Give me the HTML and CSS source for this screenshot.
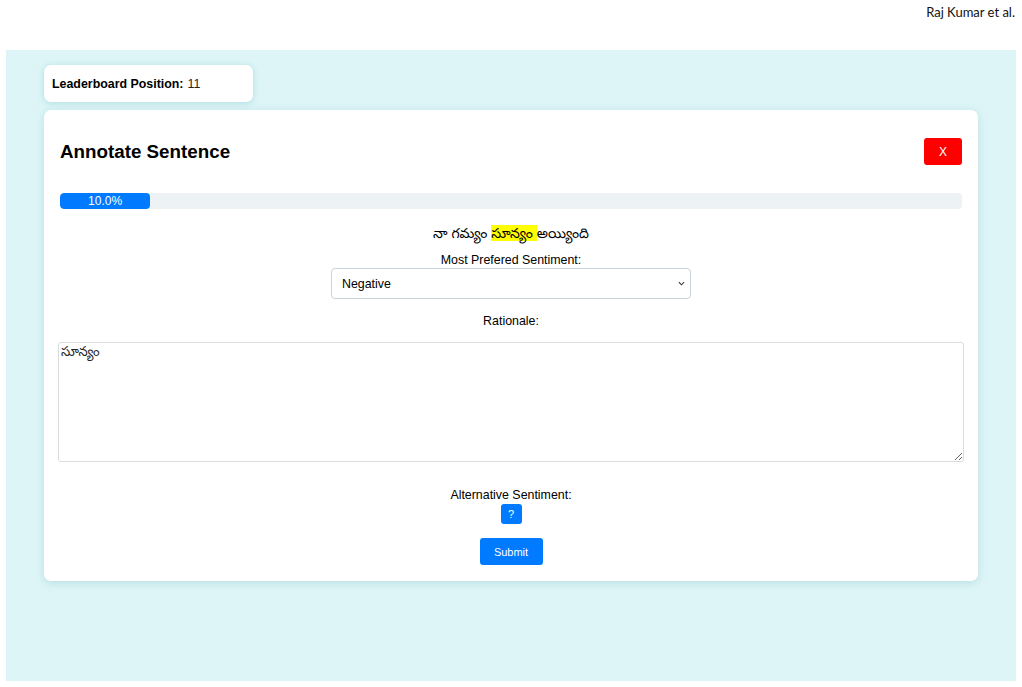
FILE: index.html
```html
<!DOCTYPE html>
<html lang="en">
<head>
  <meta charset="UTF-8" />
  <meta name="viewport" content="width=device-width, initial-scale=1.0"/>
  <title>Annotate Sentence</title>
  <link rel="stylesheet" href="styles.css">
</head>
<body>

  <div class="running-head">Raj Kumar et al.</div>

  <div class="screen">
    <div class="leaderboard">
      <strong>Leaderboard Position:</strong> <span class="rank">11</span>
    </div>

    <div class="annotate-card">
      <div class="card-head">
        <h2>Annotate Sentence</h2>
        <button class="btn-close">X</button>
      </div>

      <div class="progress">
        <div class="progress-fill" style="width: 10%;">10.0%</div>
      </div>

      <p class="sentence">నా గమ్యం <mark>సూన్యం </mark>అయ్యింది</p>

      <label class="field-label sentiment-label" for="sentiment">Most Prefered Sentiment:</label>
      <div class="select-wrap">
        <select id="sentiment" class="sentiment-select">
          <option>Negative</option>
          <option>Positive</option>
          <option>Neutral</option>
        </select>
        <svg class="select-arrow" viewBox="0 0 8 5" fill="none">
          <polyline points="1 1 4 4 7 1" />
        </svg>
      </div>

      <label class="field-label rationale-label" for="rationale">Rationale:</label>
      <textarea id="rationale" class="rationale">సూన్యం</textarea>

      <div class="field-label alt-label">Alternative Sentiment:</div>
      <button class="btn-blue btn-help">?</button>

      <button class="btn-blue btn-submit">Submit</button>
    </div>
  </div>

</body>
</html>
```

FILE: styles.css
```css
body {
  margin: 0;
  background: #fff;
  font-family: 'Liberation Sans', Arial, 'Noto Sans Telugu', 'Noto Sans', sans-serif;
  color: #000;
}

.running-head {
  height: 50px;
  padding: 4px 7px 0 0;
  box-sizing: border-box;
  text-align: right;
  font-family: 'Lato', 'DejaVu Sans', sans-serif;
  font-size: 13px;
  color: #111;
}

.screen {
  margin: 0 6px 6px;
  height: 631px;
  background: #ddf5f7;
  padding: 15px 38px 0 38px;
  box-sizing: border-box;
}

.leaderboard {
  width: 209px;
  height: 37px;
  box-sizing: border-box;
  padding: 0 8px;
  display: flex;
  align-items: center;
  gap: 4px;
  background: #fff;
  border-radius: 7px;
  box-shadow: 0 1px 6px rgba(120, 190, 200, 0.45);
  font-size: 12.4px;
}

.rank {
  color: #222;
}

.annotate-card {
  margin-top: 8px;
  background: #fff;
  border-radius: 7px;
  box-shadow: 0 2px 8px rgba(120, 180, 190, 0.35);
  padding: 28px 16px 16px;
  display: flex;
  flex-direction: column;
  align-items: center;
}

.card-head {
  align-self: stretch;
  display: flex;
  justify-content: space-between;
  align-items: center;
}

.card-head h2 {
  margin: 0;
  font-size: 18.8px;
  font-weight: bold;
}

.btn-close {
  width: 38px;
  height: 27px;
  border: none;
  border-radius: 3px;
  background: #ff0000;
  color: #fff;
  font-family: inherit;
  font-size: 12px;
}

.progress {
  align-self: stretch;
  margin-top: 28px;
  height: 16px;
  background: #edf2f5;
  border-radius: 4px;
  overflow: hidden;
}

.progress-fill {
  height: 100%;
  background: #007bff;
  border-radius: 4px;
  color: #fff;
  font-size: 12px;
  line-height: 16px;
  text-align: center;
}

.sentence {
  margin: 14px 0 0;
  font-size: 14px;
  line-height: 20px;
}

.sentence mark {
  background: #ffff00;
  color: #000;
}

.field-label {
  font-size: 12.4px;
  line-height: 15px;
}

.sentiment-label {
  margin-top: 10px;
}

.select-wrap {
  position: relative;
}

.sentiment-select {
  display: block;
  width: 360px;
  height: 31px;
  padding: 0 10px;
  border: 1px solid #c8d3da;
  border-radius: 4px;
  background: #fff;
  font-family: inherit;
  font-size: 12.4px;
  color: #000;
  appearance: none;
  -webkit-appearance: none;
}

.select-arrow {
  position: absolute;
  right: 6px;
  top: 13px;
  width: 7px;
  height: 5px;
  stroke: #333;
  stroke-width: 1.2;
  pointer-events: none;
}

.rationale-label {
  margin-top: 15px;
}

.rationale {
  align-self: stretch;
  margin: 13px -2px 0;
  height: 120px;
  box-sizing: border-box;
  padding: 2px;
  border: 1px solid #d8dde0;
  border-radius: 3px;
  font-family: 'Noto Sans Telugu', 'Noto Sans', sans-serif;
  font-size: 13px;
  color: #222;
}

.alt-label {
  margin-top: 26px;
}

.btn-blue {
  border: none;
  border-radius: 3px;
  background: #007bff;
  color: #fff;
  font-family: inherit;
  font-size: 11px;
}

.btn-help {
  margin-top: 1px;
  width: 21px;
  height: 20px;
  padding: 0;
}

.btn-submit {
  margin-top: 14px;
  width: 63px;
  height: 27px;
}
```
